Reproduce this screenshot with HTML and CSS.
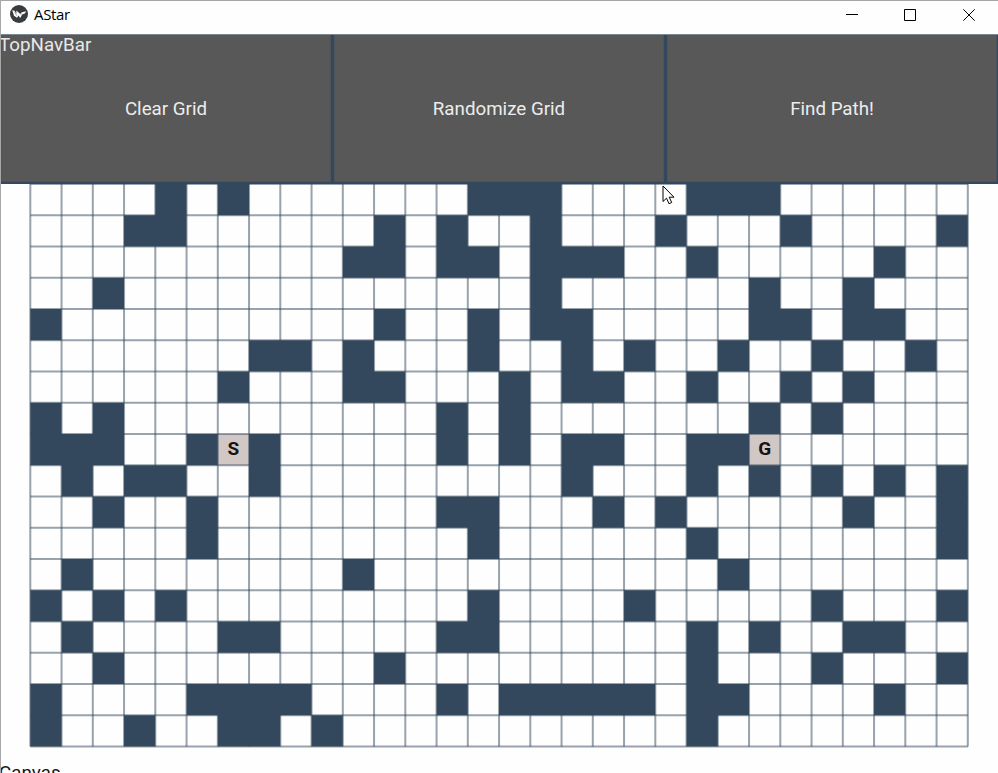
FILE: index.html
```html
<!DOCTYPE html>
<html lang="en">
<head>
<meta charset="utf-8">
<title>AStar</title>
<link rel="stylesheet" href="styles.css">
</head>
<body>
<div class="window">
  <header class="titlebar">
    <svg class="logo" viewBox="0 0 18 18"><circle cx="9" cy="9" r="9" fill="#383c3f"/><path d="M2.200 5.200 4.400 5.800l2 3V5.600l3.800 3.400 1.600-1.800 4.400-1-1.400 2.400-2.600 1-2 3.400-1.800-2.400L7 12.800 4 10.800z" fill="#fff"/><path d="m4.800 7.200 2 3.600M10.600 9.800l1.600-1.200" stroke="#73777a" stroke-width=".6"/></svg>
    <span class="title">AStar</span>
    <div class="controls">
      <svg viewBox="0 0 12 12"><path d="M0 5.500H12"/></svg>
      <svg viewBox="0 0 12 12"><path d="M.5.5h11v11H.5z"/></svg>
      <svg viewBox="0 0 12 12"><path d="m.3.3 11.400 11.400m0-11.400L.3 11.700"/></svg>
    </div>
  </header>
  <nav class="navbar">
    <span class="nav-label">TopNavBar</span>
    <button class="nav-button">Clear Grid</button>
    <button class="nav-button">Randomize Grid</button>
    <button class="nav-button">Find Path!</button>
  </nav>
  <main class="board">
    <svg id="grid" class="grid" viewBox="0 0 940 565"></svg>
    <span class="canvas-label">Canvas</span>
  </main>
  <svg class="cursor" viewBox="0 0 13 20"><path d="M1 1v15.500l3.500-3.300 2.500 5.500 2.700-1.200-2.500-5.300H12z"/></svg>
</div>
<script src="grid.js"></script>
</body>
</html>
```
FILE: styles.css
```css
* { box-sizing: border-box; }
body {
  margin: 0;
  overflow: hidden;
  background: #fefefe;
  font-family: Roboto, "Liberation Sans", sans-serif;
}
.window {
  position: relative;
  display: flex;
  flex-direction: column;
  width: 998px;
  height: 773px;
  overflow: hidden;
  border-left: 1px solid #a9a9a9;
}
.titlebar {
  display: flex;
  align-items: center;
  flex: none;
  height: 34px;
  padding: 0 23px 5px 9px;
  border-top: 1px solid #a5a5a5;
}
.logo { width: 18px; height: 18px; margin-top: -2px; }
.title {
  margin: -3px 0 0 6px;
  color: #000;
  font: 15px/20px "Open Sans", "Noto Sans", sans-serif;
  letter-spacing: -0.350px;
}
.controls { display: flex; gap: 47px; margin-left: auto; }
.controls svg {
  width: 12px;
  height: 12px;
  fill: none;
  stroke: #000;
  stroke-width: 1;
}
.controls svg:first-child { margin-right: -1px; }
.navbar {
  position: relative;
  display: grid;
  grid-template-columns: repeat(3, 1fr);
  gap: 3px;
  flex: none;
  height: 150px;
  padding: 0 1px 2px 0;
  border-top: 1px solid #7b8894;
  background: #33485c;
}
.nav-button {
  padding: 1px 0 0;
  border: 1px solid #4c5359;
  border-top: 0;
  border-left-color: #50555a;
  background: #585858;
  color: #ececec;
  font: 18.750px/24px Roboto, sans-serif;
}
.nav-label {
  position: absolute;
  top: -2px;
  left: -2px;
  color: #e8e8e8;
  font-size: 18.750px;
  line-height: 24px;
}
.board { position: relative; flex: 1; padding-left: 28px; }
.grid { display: block; width: 940px; height: 565px; margin-top: -1px; }
.wall { fill: #33485c; }
.endpoint { fill: #d1c7c5; }
.line { fill: none; stroke: #33485c; stroke-opacity: .5; stroke-width: 2; }
.mark {
  fill: #181212;
  font: bold 19px Roboto, sans-serif;
  text-anchor: middle;
}
.canvas-label {
  position: absolute;
  top: 577px;
  left: -2px;
  color: #181818;
  font-size: 18.750px;
  line-height: 24px;
}
.cursor {
  position: absolute;
  top: 185px;
  left: 661px;
  width: 13px;
  height: 20px;
  fill: #fff;
  stroke: #000;
  stroke-width: 1;
}
```
FILE: grid.js
```js
const walls = [
  [4, 6, 14, 15, 16, 21, 22, 23],
  [3, 4, 11, 13, 16, 20, 24, 29],
  [10, 11, 13, 14, 16, 17, 18, 21, 27],
  [2, 16, 23, 26],
  [0, 11, 14, 16, 17, 23, 24, 26, 27],
  [7, 8, 10, 14, 17, 19, 22, 25, 28],
  [6, 10, 11, 15, 17, 18, 21, 24, 26],
  [0, 2, 13, 15, 23, 25],
  [0, 1, 2, 5, 7, 13, 15, 17, 18, 21, 22],
  [1, 3, 4, 7, 17, 21, 23, 25, 27, 29],
  [2, 5, 13, 14, 18, 20, 26, 29],
  [5, 14, 21, 29],
  [1, 10, 22],
  [0, 2, 4, 14, 19, 25, 29],
  [1, 6, 7, 13, 14, 21, 23, 26, 27],
  [2, 11, 21, 25, 29],
  [0, 5, 6, 7, 8, 13, 15, 16, 17, 18, 19, 21, 22, 27],
  [0, 3, 6, 7, 9, 21]
];
const size = 31.25, left = 1.3, top0 = 1;
const columns = 30, rows = walls.length;
const X = c => left + c * size;
const Y = r => top0 + r * size;

// Adjacent walls in a row are merged so no seam shows between them.
let wallPath = '';
walls.forEach((row, r) => {
  for (let i = 0; i < row.length; i++) {
    const start = row[i];
    while (row[i + 1] === row[i] + 1) i++;
    wallPath += `M${X(start)} ${Y(r)}H${X(row[i] + 1)}V${Y(r + 1)}H${X(start)}z`;
  }
});

let lines = '';
for (let c = 0; c <= columns; c++) lines += `<path class="line" d="M${X(c)} ${Y(0)}V${Y(rows)}"/>`;
for (let r = 0; r <= rows; r++) lines += `<path class="line" d="M${X(0)} ${Y(r)}H${X(columns)}"/>`;

const endpoints = [['S', 6, 8], ['G', 23, 8]];
const cells = endpoints.map(([, c, r]) =>
  `<rect class="endpoint" x="${X(c)}" y="${Y(r)}" width="${size}" height="${size}"/>`).join('');
const marks = endpoints.map(([name, c, r]) =>
  `<text class="mark" x="${X(c) + size / 2}" y="${Y(r) + 21}">${name}</text>`).join('');

document.getElementById('grid').innerHTML =
  cells + lines + `<path class="wall" d="${wallPath}"/>` + marks;
```
